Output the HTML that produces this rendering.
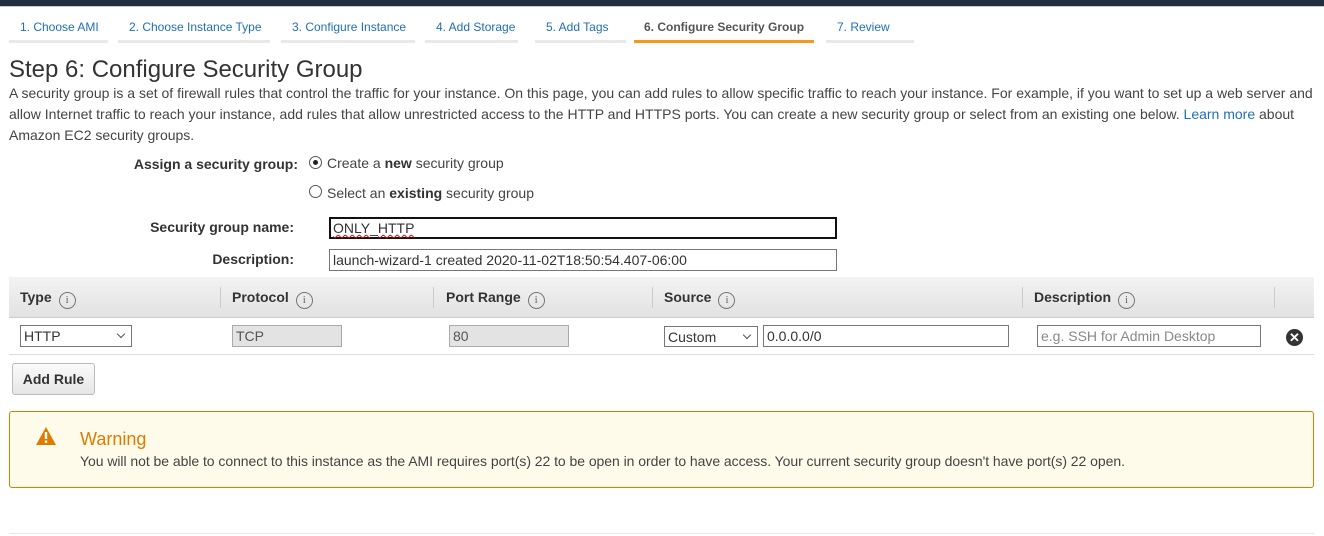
<!DOCTYPE html>
<html><head><style>
*{box-sizing:border-box;margin:0;padding:0}
body{width:1324px;height:536px;background:#fff;font-family:"Liberation Sans",Arial,sans-serif;color:#444;position:relative;overflow:hidden;font-size:14px}
.a{position:absolute}
.tab{position:absolute;top:18px;height:25px;padding-top:2px;border-bottom:3px solid #e9e9e9;font-size:12px;color:#1f6fb5;padding-left:11px;white-space:nowrap}
.lbl{position:absolute;right:1026px;font-weight:bold;color:#333;font-size:14px}
.inp{position:absolute;border:1px solid #777;background:#fff;font-size:14px;padding:2px 3px;color:#333}
.th{position:absolute;top:289px;font-weight:bold;font-size:14px;color:#333}
.ic{display:inline-block;position:relative;top:-3px;width:17px;height:17px;border:1px solid #777;border-radius:50%;font-size:11px;text-align:center;line-height:15px;color:#666;font-weight:normal;margin-left:7px;vertical-align:-4px;font-family:"Liberation Serif",serif}
.dv{position:absolute;top:287px;width:1px;height:21px;background:#ccc}
.sel::after{content:"";position:absolute;right:7px;top:5px;width:5px;height:5px;border-right:1px solid #555;border-bottom:1px solid #555;transform:rotate(45deg)}
.ro{background:#e3e3e3;border-color:#aaa;color:#555}
</style></head><body>
<div class="a" style="left:0;top:0;width:1324px;height:6px;background:#232f3e"></div>
<div class="a" style="left:0;top:6px;width:1324px;height:1px;background:#c9c9c9"></div>
<div class="tab" style="left:9px;width:99px">1. Choose AMI</div>
<div class="tab" style="left:118px;width:152px">2. Choose Instance Type</div>
<div class="tab" style="left:281px;width:134px">3. Configure Instance</div>
<div class="tab" style="left:425px;width:93px">4. Add Storage</div>
<div class="tab" style="left:535px;width:91px">5. Add Tags</div>
<div class="tab" style="left:634px;width:180px;border-bottom-color:#f7971b;color:#555;font-weight:bold;padding-left:10px">6. Configure Security Group</div>
<div class="tab" style="left:826px;width:88px">7. Review</div>
<div class="a" style="left:9px;top:56px;font-size:24px;color:#333">Step 6: Configure Security Group</div>
<div class="a" style="left:9px;top:83px;width:1310px;line-height:21px;font-size:14px;color:#444">A security group is a set of firewall rules that control the traffic for your instance. On this page, you can add rules to allow specific traffic to reach your instance. For example, if you want to set up a web server and allow Internet traffic to reach your instance, add rules that allow unrestricted access to the HTTP and HTTPS ports. You can create a new security group or select from an existing one below. <span style="color:#1f6fb5">Learn more</span> about Amazon EC2 security groups.</div>
<div class="lbl" style="top:156px">Assign a security group:</div>
<div class="a" style="left:309px;top:156px;width:13px;height:13px;border:1px solid #555;border-radius:50%"><div style="width:5px;height:5px;background:#222;border-radius:50%;margin:3px"></div></div>
<div class="a" style="left:327px;top:155px;color:#444">Create a <b style="color:#333">new</b> security group</div>
<div class="a" style="left:309px;top:185px;width:13px;height:13px;border:1px solid #555;border-radius:50%"></div>
<div class="a" style="left:327px;top:185px;color:#444">Select an <b style="color:#333">existing</b> security group</div>
<div class="lbl" style="top:219px;right:1030px">Security group name:</div>
<div class="inp" style="left:329px;top:217px;width:508px;height:22px;border:2px solid #111;padding:1px 2px"><span style="text-decoration:underline wavy #d00;text-decoration-thickness:1px">ONLY</span>_<span style="text-decoration:underline wavy #d00;text-decoration-thickness:1px">HTTP</span></div>
<div class="lbl" style="top:251px;right:1030px">Description:</div>
<div class="inp" style="left:329px;top:249px;width:508px;height:22px">launch-wizard-1 created 2020-11-02T18:50:54.407-06:00</div>
<div class="a" style="left:9px;top:277px;width:1305px;height:41px;background:linear-gradient(#f3f3f3,#e2e2e2);border-bottom:1px solid #ccc"></div>
<div class="th" style="left:20px">Type<span class="ic">i</span></div>
<div class="dv" style="left:220px"></div>
<div class="th" style="left:232px">Protocol<span class="ic">i</span></div>
<div class="dv" style="left:433px"></div>
<div class="th" style="left:446px">Port Range<span class="ic">i</span></div>
<div class="dv" style="left:652px"></div>
<div class="th" style="left:664px">Source<span class="ic">i</span></div>
<div class="dv" style="left:1022px"></div>
<div class="th" style="left:1034px">Description<span class="ic">i</span></div>
<div class="dv" style="left:1274px"></div>
<div class="a" style="left:9px;top:354px;width:1305px;height:1px;background:#ddd"></div>
<div class="inp sel" style="left:20px;top:325px;width:112px;height:22px">HTTP</div>
<div class="inp ro" style="left:232px;top:325px;width:110px;height:22px">TCP</div>
<div class="inp ro" style="left:449px;top:325px;width:120px;height:22px">80</div>
<div class="inp sel" style="left:664px;top:326px;width:94px;height:21px">Custom</div>
<div class="inp" style="left:763px;top:325px;width:246px;height:22px">0.0.0.0/0</div>
<div class="inp" style="left:1037px;top:325px;width:224px;height:22px;color:#888">e.g. SSH for Admin Desktop</div>
<div class="a" style="left:1286px;top:329px;width:17px;height:17px;border-radius:50%;background:#333;color:#fff;font-weight:bold;font-size:13px;text-align:center;line-height:17px">✕</div>
<div class="a" style="left:12px;top:363px;width:83px;height:32px;border:1px solid #bbb;border-radius:3px;background:linear-gradient(#fafafa,#e6e6e6);font-weight:bold;color:#333;text-align:center;line-height:30px">Add Rule</div>
<div class="a" style="left:9px;top:411px;width:1305px;height:77px;border:1px solid #e07b00;border-radius:3px;background:#fffbea"></div>
<svg class="a" style="left:36px;top:427px" width="20" height="18" viewBox="0 0 20 18"><path d="M10 0 L20 18 L0 18 Z" fill="#e07b00"/><rect x="8.8" y="5" width="2.4" height="7" fill="#fff"/><rect x="8.8" y="13.5" width="2.4" height="2.4" fill="#fff"/></svg>
<div class="a" style="left:80px;top:429px;font-size:18px;color:#e07b00">Warning</div>
<div class="a" style="left:80px;top:453px;font-size:14px;color:#444;white-space:nowrap;letter-spacing:-0.05px">You will not be able to connect to this instance as the AMI requires port(s) 22 to be open in order to have access. Your current security group doesn't have port(s) 22 open.</div>
<div class="a" style="left:9px;top:533px;width:1305px;height:1px;background:#e6e6e6"></div>
</body></html>
